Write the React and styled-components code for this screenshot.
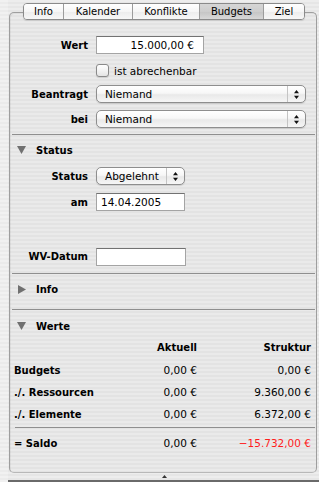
import React from "react";
import styled, { createGlobalStyle } from "styled-components";

const GlobalStyle = createGlobalStyle`
  html, body {
    margin: 0;
    padding: 0;
  }
  body {
    font-family: "DejaVu Sans", "Liberation Sans", sans-serif;
    font-size: 10.5px;
    color: #000;
    background: repeating-linear-gradient(#ededed 0 2px, #e6e6e6 2px 4px);
  }
`;

const Window = styled.div`
  width: 319px;
  height: 482px;
  display: flex;
  overflow: hidden;
`;

const SideStrip = styled.div`
  width: 8px;
  flex: none;
  background: repeating-linear-gradient(#f1f1f1 0 2px, #ebebeb 2px 4px);
`;

const Main = styled.div`
  flex: 1;
  display: flex;
  flex-direction: column;
`;

const TabBar = styled.div`
  position: relative;
  z-index: 1;
  display: flex;
  height: 17px;
  margin: 3px 0 0 15px;
  align-self: flex-start;
  border: 1px solid #8a8a8a;
  border-radius: 4px;
  overflow: hidden;
  box-sizing: border-box;
  box-shadow: 0 1px 1px rgba(0, 0, 0, 0.12);
`;

const Tab = styled.div`
  width: ${(p) => p.$w}px;
  display: flex;
  align-items: center;
  justify-content: center;
  font-size: 10px;
  box-sizing: border-box;
  border-left: ${(p) => (p.$first ? "none" : "1px solid #9c9c9c")};
  background: ${(p) =>
    p.$active
      ? "linear-gradient(#d6d6d6, #cdcdcd 50%, #c4c4c4 51%, #d8d8d8)"
      : "linear-gradient(#ffffff, #f6f6f6 50%, #ececec 51%, #f7f7f7)"};
`;

const Panel = styled.div`
  margin: -8px 0 0 1px;
  width: 308px;
  height: 461px;
  box-sizing: border-box;
  border: 1px solid #9e9e9e;
  border-bottom-color: #b8b8b8;
  border-radius: 5px;
  display: flex;
  flex-direction: column;
  background: repeating-linear-gradient(#eaeaea 0 2px, #e3e3e3 2px 4px);
  box-shadow: inset 1px 1px 0 rgba(0, 0, 0, 0.05);
`;

const FormRow = styled.div`
  display: grid;
  grid-template-columns: 78px auto;
  column-gap: 8px;
  align-items: center;
  height: ${(p) => p.$h || 18}px;
  margin-top: ${(p) => p.$mt}px;
`;

const Label = styled.span`
  font-weight: bold;
  font-size: 10px;
  text-align: right;
`;

const TextField = styled.div`
  width: ${(p) => p.$w}px;
  height: 18px;
  box-sizing: border-box;
  border: 1px solid #a4a4a4;
  border-top-color: #727272;
  background: #fff;
  display: flex;
  align-items: center;
  justify-content: ${(p) => (p.$right ? "flex-end" : "flex-start")};
  padding: ${(p) => (p.$right ? "0 9px 0 0" : "0 0 0 4px")};
  white-space: nowrap;
`;

const Popup = styled.div`
  width: ${(p) => p.$w}px;
  height: 18px;
  box-sizing: border-box;
  border: 1px solid #8e8e8e;
  border-radius: 5px;
  display: flex;
  align-items: stretch;
  background: linear-gradient(#ffffff, #f7f7f7 45%, #e9e9e9 55%, #f6f6f6);
  box-shadow: 0 1px 1px rgba(0, 0, 0, 0.12);
`;

const PopupText = styled.span`
  flex: 1;
  display: flex;
  align-items: center;
  padding-left: 8px;
`;

const PopupArrows = styled.span`
  width: 17px;
  display: flex;
  align-items: center;
  justify-content: center;
  border-left: 1px solid #c4c4c4;
`;

const Arrows = () => (
  <svg width="5" height="9" viewBox="0 0 5 9">
    <path d="M2.5 0 L5 3.2 L0 3.2 Z M2.5 9 L5 5.8 L0 5.8 Z" fill="#111" />
  </svg>
);

const CheckRow = styled.label`
  display: flex;
  align-items: center;
  gap: 5px;
`;

const CheckBox = styled.span`
  width: 13px;
  height: 13px;
  box-sizing: border-box;
  border: 1px solid #8a8a8a;
  border-radius: 3px;
  background: linear-gradient(#ffffff, #f3f3f3 50%, #e4e4e4);
  box-shadow: 0 1px 1px rgba(0, 0, 0, 0.12);
`;

const Separator = styled.div`
  height: 1px;
  flex: none;
  background: #8f8f8f;
  margin: ${(p) => p.$mt}px 1px 0 ${(p) => p.$left}px;
`;

const SectionHeader = styled.div`
  display: flex;
  align-items: center;
  gap: 10px;
  height: 20px;
  padding-left: 7px;
  margin-top: ${(p) => p.$mt}px;
  font-weight: bold;
  font-size: 10px;
`;

const TriangleBox = styled.span`
  width: 9px;
  display: flex;
  justify-content: center;
`;

const Disclosure = ({ open }) => (
  <TriangleBox>
    {open ? (
      <svg width="9" height="8" viewBox="0 0 9 8">
        <path d="M0 0 H9 L4.5 8 Z" fill="#707070" />
      </svg>
    ) : (
      <svg width="8" height="9" viewBox="0 0 8 9">
        <path d="M0 0 V9 L8 4.5 Z" fill="#707070" />
      </svg>
    )}
  </TriangleBox>
);

const ValueGrid = styled.div`
  display: grid;
  grid-template-columns: 1fr 60px 114px;
  padding: 0 5px 0 4px;
  margin-top: ${(p) => p.$mt}px;
`;

const Cell = styled.div`
  height: ${(p) => p.$h}px;
  display: flex;
  align-items: center;
  justify-content: ${(p) => (p.$label ? "flex-start" : "flex-end")};
  font-weight: ${(p) => (p.$bold ? "bold" : "normal")};
  font-size: ${(p) => (p.$bold ? "10px" : "10.5px")};
  color: ${(p) => (p.$neg ? "#ff1c1c" : "#000")};
  white-space: nowrap;
`;

const Footer = styled.div`
  height: 7px;
  display: flex;
  justify-content: center;
  align-items: center;
  padding-left: 2px;
  box-sizing: border-box;
`;

const BottomLine = styled.div`
  height: 2px;
  background: #6a6a6a;
`;

const tabs = [
  { name: "Info", w: 40 },
  { name: "Kalender", w: 69 },
  { name: "Konflikte", w: 67 },
  { name: "Budgets", w: 64, active: true },
  { name: "Ziel", w: 41 },
];

const rows = [
  { label: "Budgets", cur: "0,00 €", str: "0,00 €" },
  { label: "./. Ressourcen", cur: "0,00 €", str: "9.360,00 €" },
  { label: "./. Elemente", cur: "0,00 €", str: "6.372,00 €" },
];

export default function App() {
  return (
    <>
      <GlobalStyle />
      <Window>
        <SideStrip />
        <Main>
          <TabBar>
            {tabs.map((t, i) => (
              <Tab key={t.name} $w={i === 0 ? t.w - 1 : t.w} $first={i === 0} $active={t.active}>
                {t.name}
              </Tab>
            ))}
          </TabBar>
          <Panel>
            <FormRow $mt={23}>
              <Label>Wert</Label>
              <TextField $w={108} $right>
                15.000,00 €
              </TextField>
            </FormRow>
            <FormRow $mt={10} $h={13}>
              <span />
              <CheckRow>
                <CheckBox />
                ist abrechenbar
              </CheckRow>
            </FormRow>
            <FormRow $mt={8}>
              <Label>Beantragt</Label>
              <Popup $w={210}>
                <PopupText>Niemand</PopupText>
                <PopupArrows>
                  <Arrows />
                </PopupArrows>
              </Popup>
            </FormRow>
            <FormRow $mt={7}>
              <Label>bei</Label>
              <Popup $w={210}>
                <PopupText>Niemand</PopupText>
                <PopupArrows>
                  <Arrows />
                </PopupArrows>
              </Popup>
            </FormRow>

            <Separator $mt={6} $left={2} />
            <SectionHeader $mt={5}>
              <Disclosure open />
              Status
            </SectionHeader>
            <FormRow $mt={7}>
              <Label>Status</Label>
              <Popup $w={89}>
                <PopupText>Abgelehnt</PopupText>
                <PopupArrows>
                  <Arrows />
                </PopupArrows>
              </Popup>
            </FormRow>
            <FormRow $mt={8}>
              <Label>am</Label>
              <TextField $w={89}>14.04.2005</TextField>
            </FormRow>
            <FormRow $mt={36} $h={19}>
              <Label>WV-Datum</Label>
              <TextField $w={90} />
            </FormRow>

            <Separator $mt={7} $left={2} />
            <SectionHeader $mt={5}>
              <Disclosure />
              Info
            </SectionHeader>

            <Separator $mt={10} $left={2} />
            <SectionHeader $mt={6}>
              <Disclosure open />
              Werte
            </SectionHeader>

            <ValueGrid $mt={3}>
              <Cell $h={16} $label />
              <Cell $h={16} $bold>Aktuell</Cell>
              <Cell $h={16} $bold>Struktur</Cell>
            </ValueGrid>
            <ValueGrid $mt={4}>
              {rows.map((r) => (
                <React.Fragment key={r.label}>
                  <Cell $h={22} $label $bold>
                    {r.label}
                  </Cell>
                  <Cell $h={22}>{r.cur}</Cell>
                  <Cell $h={22}>{r.str}</Cell>
                </React.Fragment>
              ))}
            </ValueGrid>
            <Separator $mt={2} $left={5} />
            <ValueGrid $mt={4}>
              <Cell $h={22} $label $bold>
                = Saldo
              </Cell>
              <Cell $h={22}>0,00 €</Cell>
              <Cell $h={22} $neg>
                −15.732,00 €
              </Cell>
            </ValueGrid>
          </Panel>
          <Footer>
            <svg width="5" height="3" viewBox="0 0 5 3">
              <path d="M2.5 0 L5 3 L0 3 Z" fill="#333" />
            </svg>
          </Footer>
          <BottomLine />
        </Main>
      </Window>
    </>
  );
}
